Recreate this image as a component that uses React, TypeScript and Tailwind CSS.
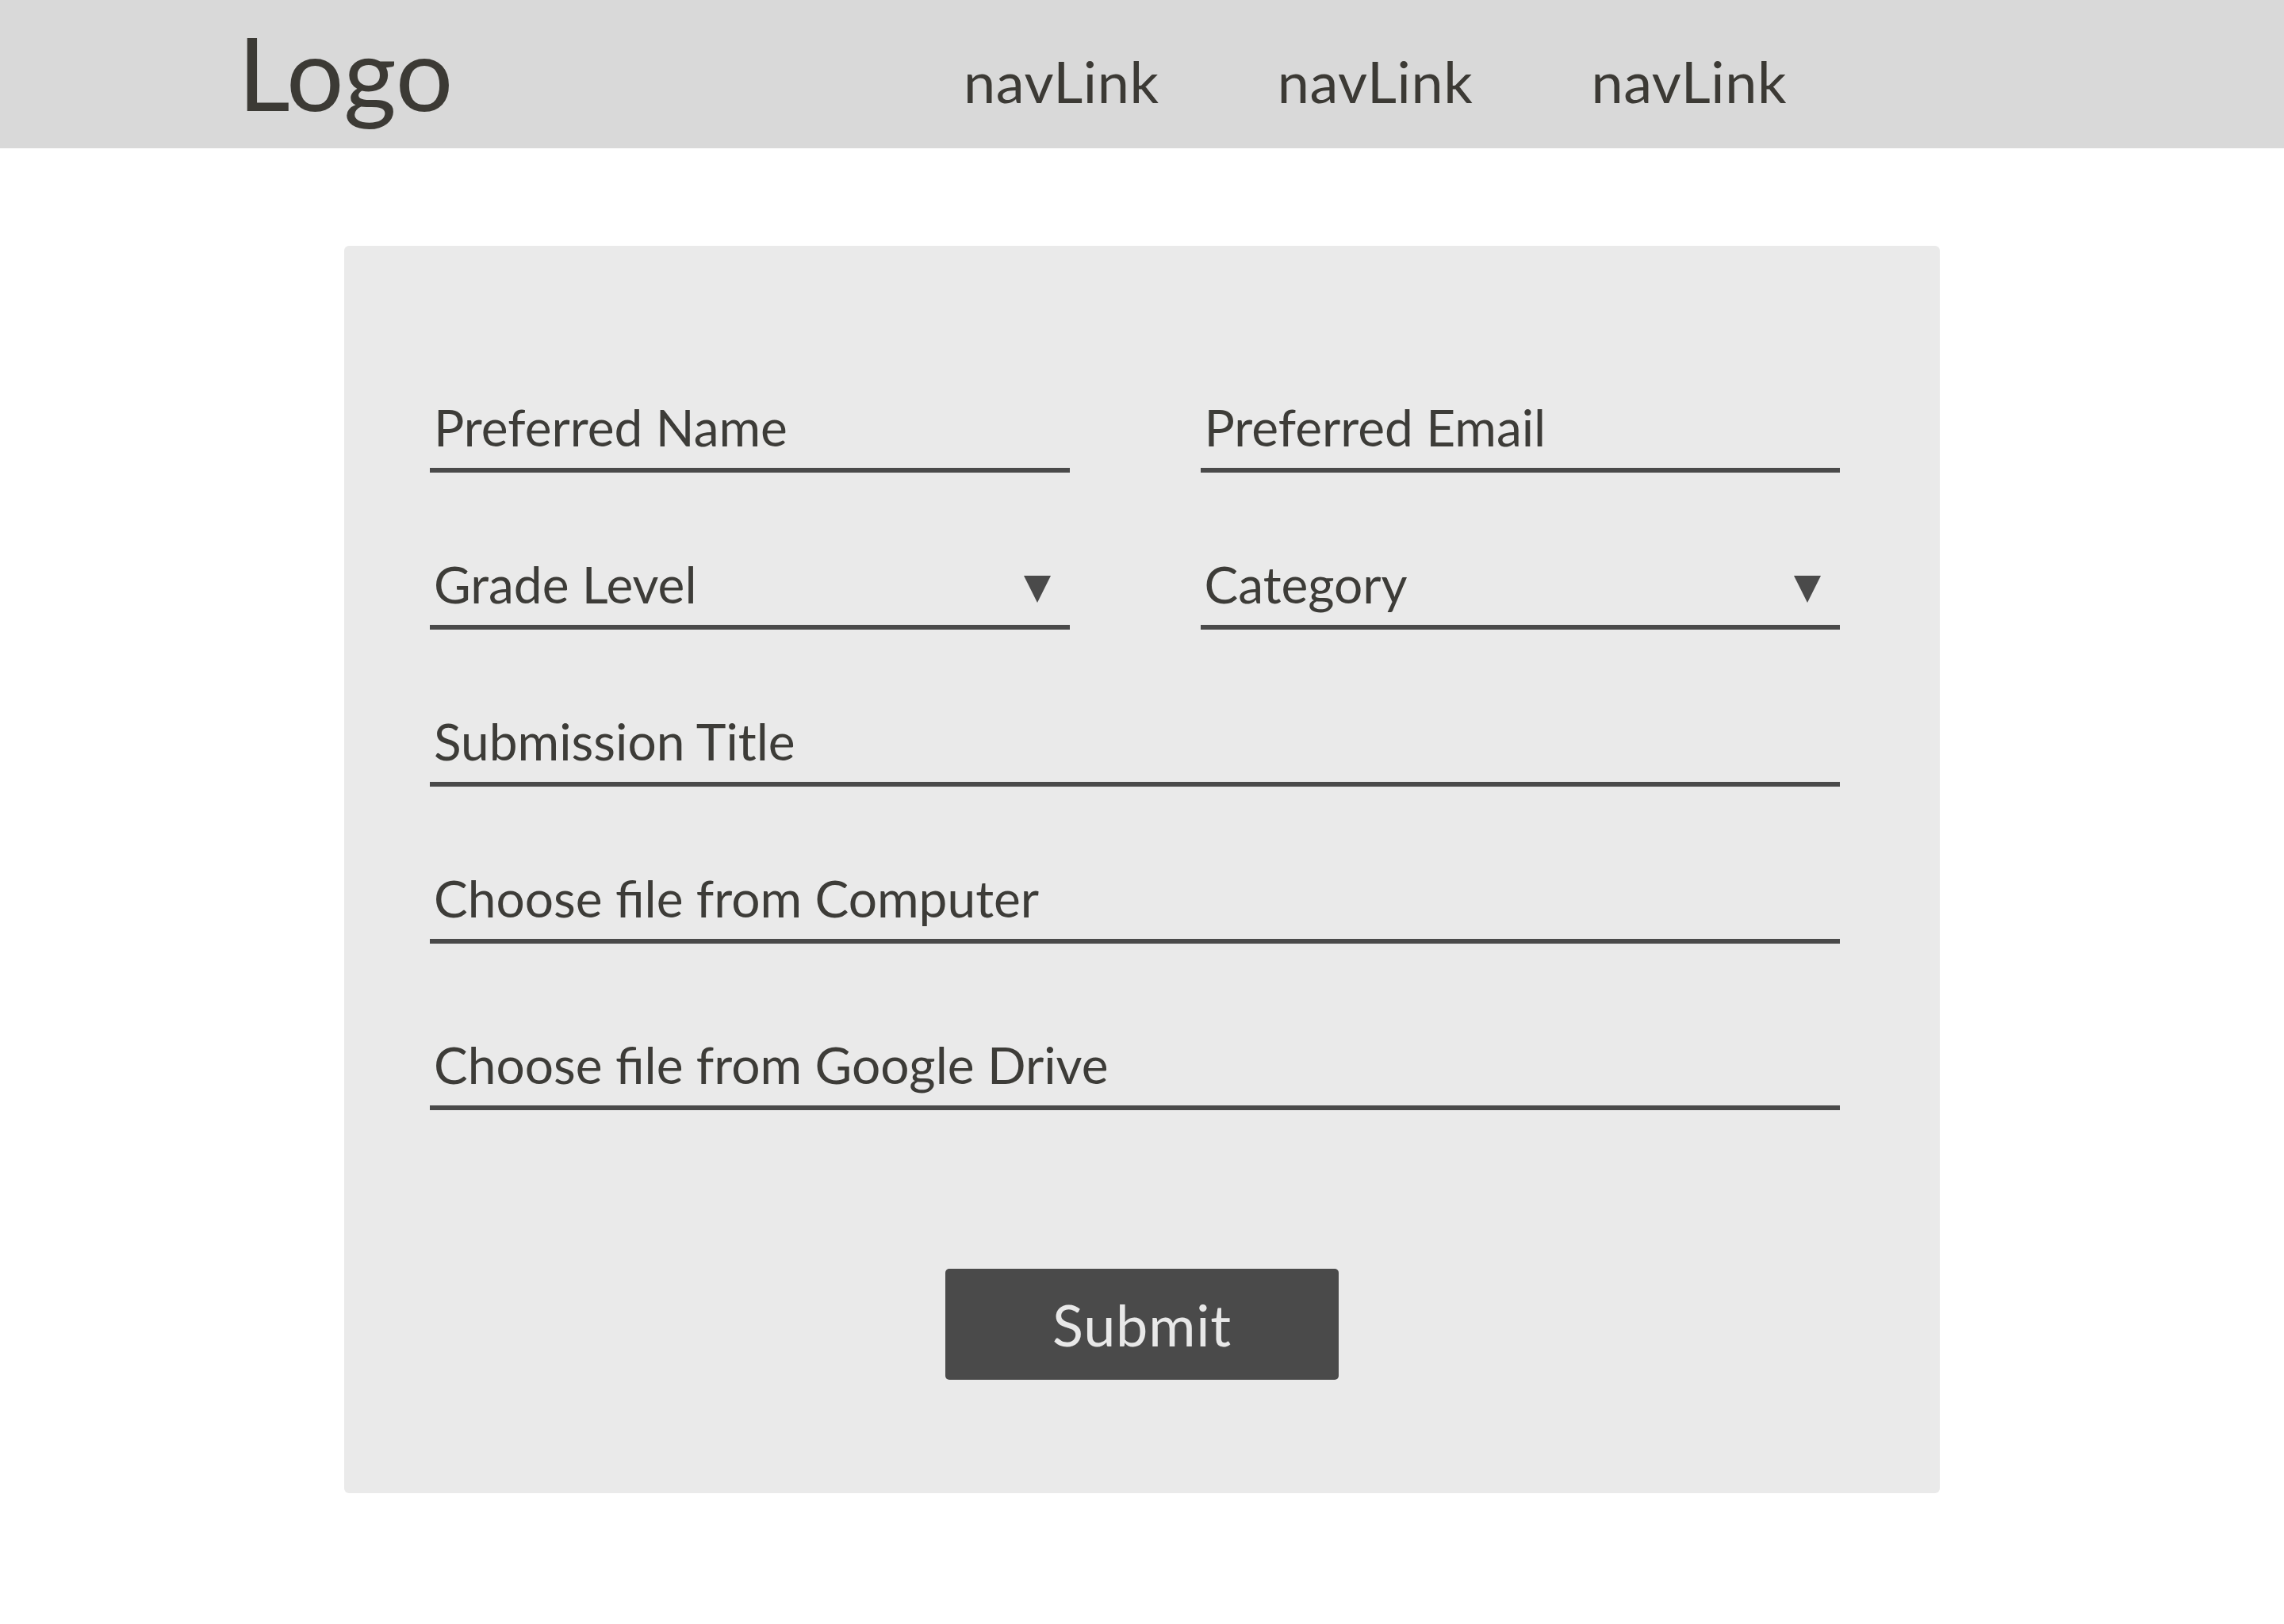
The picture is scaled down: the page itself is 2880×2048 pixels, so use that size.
const FONT = "font-['Lato','Open_Sans',sans-serif]";

function Field({ label, select = false, className = "" }: { label: string; select?: boolean; className?: string }) {
  return (
    <div className={`flex items-end justify-between border-b-[6px] border-[#4a4a4a] pb-[19px] pl-[5px] ${className}`}>
      <span className="text-[64px] leading-none text-[#3d3c38]">{label}</span>
      {select && (
        <svg width="34" height="34" viewBox="0 0 34 34" className="mr-[24px] mb-[9px]">
          <polygon points="0,0 34,0 17,34" fill="#4a4a4a" />
        </svg>
      )}
    </div>
  );
}

export default function App() {
  return (
    <div className={`min-h-screen bg-white ${FONT}`}>
      <header className="flex h-[187px] bg-[#d9d9d9] pl-[300px]">
        <div className="mt-[27px] w-[915px] text-[128px] leading-none text-[#3c3a35]">Logo</div>
        <nav className="mt-[66px] flex gap-[149px] text-[72px] leading-none tracking-[0.6px] text-[#3c3a35]">
          <a href="#">navLink</a>
          <a href="#">navLink</a>
          <a href="#">navLink</a>
        </nav>
      </header>

      <main className="mx-auto mt-[123px] h-[1573px] w-[2012px] rounded-[6px] bg-[#eaeaea] pt-[197px] pl-[108px] pr-[126px]">
        <div className="grid grid-cols-2 gap-x-[165px]">
          <Field label="Preferred Name" />
          <Field label="Preferred Email" />
          <Field label="Grade Level" select className="mt-[109px]" />
          <Field label="Category" select className="mt-[109px]" />
        </div>
        <Field label="Submission Title" className="mt-[109px]" />
        <Field label="Choose file from Computer" className="mt-[109px]" />
        <Field label="Choose file from Google Drive" className="mt-[121px]" />

        <div className="mt-[200px] flex justify-center pl-[18px]">
          <button
            type="button"
            className="flex h-[140px] w-[496px] items-center justify-center rounded-[5px] bg-[#4a4a4a] text-[72px] leading-none tracking-[0.8px] text-[#e8e8e8]"
          >
            Submit
          </button>
        </div>
      </main>
    </div>
  );
}
